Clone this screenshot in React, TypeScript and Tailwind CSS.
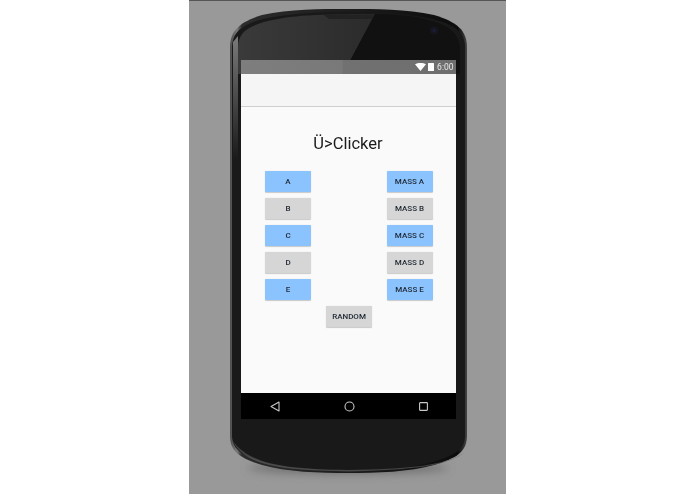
import React from 'react';

const font = { roboto: "font-['Roboto','Liberation_Sans',sans-serif]" };

function PhoneBody() {
  return (
    <svg className="absolute left-[-41px] top-[-9px]" width="317" height="494" viewBox="189 0 317 494">
      <defs>
        <linearGradient id="bezel" x1="0" y1="0" x2="1" y2="0">
          <stop offset="0" stopColor="#3a3a3a" />
          <stop offset="1" stopColor="#2b2b2b" />
        </linearGradient>
        <linearGradient id="edge" x1="0" y1="0" x2="1" y2="0">
          <stop offset="0" stopColor="#4a4a4a" />
          <stop offset="0.03" stopColor="#7a7a7a" />
          <stop offset="0.05" stopColor="#2c2c2c" />
          <stop offset="0.96" stopColor="#0c0c0c" />
          <stop offset="1" stopColor="#444" />
        </linearGradient>
        <linearGradient id="sideGlare" x1="0" y1="0" x2="0" y2="1">
          <stop offset="0" stopColor="#7a7a7a" />
          <stop offset="1" stopColor="#191919" />
        </linearGradient>
        <filter id="drop" filterUnits="userSpaceOnUse" x="189" y="440" width="317" height="54">
          <feGaussianBlur stdDeviation="4" />
        </filter>
      </defs>
      <ellipse cx="348" cy="468" rx="100" ry="6" fill="#707070" filter="url(#drop)" />
      <path
        d="M230 48C230 30 240 22 262 15C290 9 320 9 348 9C376 9 406 9 434 15C457 22 467 30 467 48L467 435C467 452 457 458 434 465C410 472 376 473 348 473C320 473 286 472 262 465C240 458 230 452 230 435Z"
        fill="url(#edge)"
      />
      <path
        d="M232 48C232 32 242 25 263 19C290 13 320 12 348 12C376 12 406 13 433 19C455 25 465 32 465 48L465 435C465 450 455 455 433 462C410 469 376 470 348 470C320 470 286 469 263 462C242 455 232 450 232 435Z"
        fill="#191919"
      />
      <path
        d="M238 48C238 34 245 28 264 22C290 15 320 14 375 14L343 74L238 74Z"
        fill="url(#bezel)"
      />
      <path d="M375 14C400 14 415 16 432 21C450 26 459 34 460 48L460 74L343 74Z" fill="#111" />
      <path d="M233 42L238 36L238 160L233 160Z" fill="url(#sideGlare)" />
      <path d="M323 14.5L375 14.5L372 19L329 19Z" fill="#222" />
      <circle cx="434" cy="30.5" r="4" fill="#16161f" />
      <circle cx="434" cy="30.5" r="1.6" fill="#1c1c3a" />
      <path d="M232 440C246 468 286 470 348 471.5C410 470 450 466 465 452C446 466 406 469 348 470C290 469 250 466 232 440Z" fill="#666" opacity="0.6" />
    </svg>
  );
}

function AppButton({ label, blue }: { label: string; blue?: boolean }) {
  return (
    <div
      className={`w-[46px] h-[21px] rounded-[1px] flex items-center justify-center text-[8px] font-medium text-[#1f2933] shadow-[0_0.5px_1px_rgba(0,0,0,0.2)] ${
        blue ? 'bg-[#8bc3ff]' : 'bg-[#d6d6d6]'
      }`}
    >
      {label}
    </div>
  );
}

function WifiIcon() {
  return (
    <svg width="11" height="8" viewBox="0 0 11 8">
      <path d="M0 1.2C3 -0.4 8 -0.4 11 1.2L5.5 8Z" fill="#fff" />
    </svg>
  );
}

function NavBar() {
  return (
    <div className="h-[26px] bg-black flex items-center justify-between pl-[29px] pr-[28px]">
      <svg width="10" height="11" viewBox="0 0 10 11" fill="none" stroke="#c8c8c8" strokeWidth="1.1">
        <path d="M9 1L1 5.5L9 10Z" strokeLinejoin="round" />
      </svg>
      <svg width="11" height="11" viewBox="0 0 11 11" fill="none" stroke="#c8c8c8" strokeWidth="1.1">
        <circle cx="5.5" cy="5.5" r="4.5" />
      </svg>
      <svg width="9" height="9" viewBox="0 0 9 9" fill="none" stroke="#c8c8c8" strokeWidth="1.1">
        <rect x="0.6" y="0.6" width="7.8" height="7.8" rx="0.6" />
      </svg>
    </div>
  );
}

export default function App() {
  const rows = ['A', 'B', 'C', 'D', 'E'];

  return (
    <div className={`w-[695px] h-[494px] bg-white overflow-hidden flex justify-center pr-[1px] ${font.roboto}`}>
      <div className="w-[317px] h-[494px] bg-[#999999] border-t border-[#555] pt-[8px] pl-[41px]">
        <div className="relative w-[237px] h-[464px] blur-[0.3px]">
          <PhoneBody />
          <div className="relative pt-[51px] pl-[11px] w-[226px]">
            <div className="w-[215px]">
              <div className="h-[14px] bg-[linear-gradient(90deg,#7e7e7e_0%,#797979_47%,#717171_47.5%,#6e6e6e_100%)] flex items-center justify-end gap-[2px] pr-[2px]">
                <WifiIcon />
                <div className="w-[6px] h-[8px] bg-white rounded-[0.5px] mr-[1px]" />
                <span className="text-[8.5px] text-[#e8e8e8]">6:00</span>
              </div>
              <div className="h-[33px] bg-[#f5f5f5] border-b border-[#cfcfcf]" />
              <div className="h-[286px] bg-[#fafafa] flex flex-col items-center">
                <h1 className="mt-[27px] h-[20px] leading-[20px] text-[16.5px] text-[#1c1c1c]">Ü&gt;Clicker</h1>
                <div className="mt-[17px] w-full pl-[24.5px] pr-[23px] flex flex-col gap-[6px]">
                  {rows.map((r, i) => (
                    <div key={r} className="flex justify-between">
                      <AppButton label={r} blue={i % 2 === 0} />
                      <AppButton label={`MASS ${r}`} blue={i % 2 === 0} />
                    </div>
                  ))}
                </div>
                <div className="mt-[6px] ml-[2px]">
                  <AppButton label="RANDOM" />
                </div>
              </div>
              <NavBar />
            </div>
          </div>
        </div>
      </div>
    </div>
  );
}
